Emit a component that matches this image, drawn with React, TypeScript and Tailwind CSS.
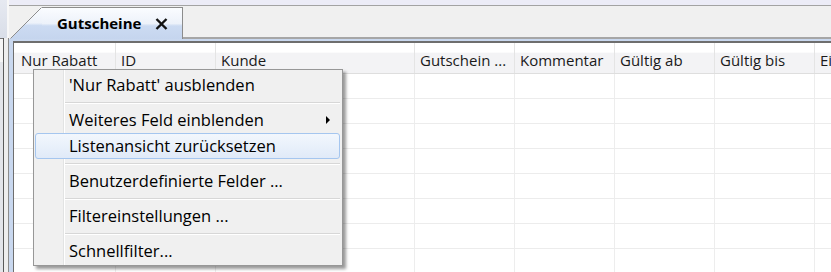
const columns = [
  { label: "Nur Rabatt", w: "w-[102px]", pl: "pl-[7px]" },
  { label: "ID", w: "w-[100px]", pl: "pl-[5px]" },
  { label: "Kunde", w: "w-[199px]", pl: "pl-[5px]" },
  { label: "Gutschein ...", w: "w-[100px]", pl: "pl-[5px]" },
  { label: "Kommentar", w: "w-[100px]", pl: "pl-[5px]" },
  { label: "Gültig ab", w: "w-[100px]", pl: "pl-[5px]" },
  { label: "Gültig bis", w: "w-[100px]", pl: "pl-[5px]" },
  { label: "Einlösung", w: "w-[100px]", pl: "pl-[5px]" },
];

const rows = Array.from({ length: 8 }, (_, i) => i);

type MenuEntry =
  | { kind: "item"; label: string; submenu?: boolean; active?: boolean }
  | { kind: "sep" };

const menu: MenuEntry[] = [
  { kind: "item", label: "'Nur Rabatt' ausblenden" },
  { kind: "sep" },
  { kind: "item", label: "Weiteres Feld einblenden", submenu: true },
  { kind: "item", label: "Listenansicht zurücksetzen", active: true },
  { kind: "sep" },
  { kind: "item", label: "Benutzerdefinierte Felder ..." },
  { kind: "sep" },
  { kind: "item", label: "Filtereinstellungen ..." },
  { kind: "sep" },
  { kind: "item", label: "Schnellfilter..." },
];

function TabSlant() {
  return (
    <svg width="32" height="32" viewBox="0 0 32 32" className="block shrink-0">
      <defs>
        <linearGradient id="tabgrad" x1="0" y1="0" x2="0" y2="1">
          <stop offset="0" stopColor="#fafcff" />
          <stop offset="0.5" stopColor="#edf2fa" />
          <stop offset="0.58" stopColor="#ccdbf2" />
          <stop offset="1" stopColor="#c5d5ee" />
        </linearGradient>
      </defs>
      <polygon points="0,32 31,0 32,0 32,32" fill="url(#tabgrad)" />
      <line x1="0.5" y1="31.5" x2="31.5" y2="0.5" stroke="#8c8c8c" strokeWidth="1" />
    </svg>
  );
}

function ContextMenu() {
  return (
    <div className="absolute left-[33px] top-[69px] w-[310px] border border-[#979797] bg-[#f0f0f0] pt-[2px] pb-[1px] text-[16.5px] text-black shadow-[3px_3px_3px_rgba(0,0,0,0.4)]">
      {/* icon gutter */}
      <div className="absolute left-[29px] top-0 bottom-0 w-[2px] border-l border-[#e2e3e3] border-r border-r-white" />
      {menu.map((m, i) =>
        m.kind === "sep" ? (
          <div key={i} className="h-[9px] pt-[4px] ml-[30px] mr-[2px]">
            <div className="h-[2px] border-t border-[#d7d7d7] border-b border-b-white" />
          </div>
        ) : m.active ? (
          <div
            key={i}
            className="relative h-[26px] ml-[1px] mr-[2px] flex items-center pl-[33px] rounded-[3px] border border-[#a5c6ef] bg-[linear-gradient(to_bottom,#f2f7fd,#e0eaf8)] whitespace-nowrap"
          >
            {m.label}
          </div>
        ) : (
          <div key={i} className="relative h-[26px] flex items-center pl-[35px] pr-[12px] whitespace-nowrap">
            <span>{m.label}</span>
            {m.submenu && (
              <span className="ml-auto w-0 h-0 border-y-[4px] border-y-transparent border-l-[4px] border-l-black" />
            )}
          </div>
        )
      )}
    </div>
  );
}

export default function App() {
  return (
    <div className="relative w-[831px] h-[272px] overflow-hidden flex bg-[#f0f0f0] font-['Open_Sans',sans-serif] text-[15px] text-[#111]">
      {/* left edge of neighbouring panel */}
      <div className="w-[9px] shrink-0 flex flex-col">
        <div className="h-[38px] flex">
          <div className="w-[7px] bg-[linear-gradient(to_bottom,#e6e9f1,#d9dee8)]" />
          <div className="w-[2px] bg-[#f7f7f7]" />
        </div>
        <div className="flex-1 flex">
          <div className="w-[3px] flex flex-col">
            <div className="h-[24px] bg-[#f6f6f6] border-t border-[#777]" />
            <div className="flex-1 bg-[#e3e5ea]" />
          </div>
          <div className="w-[1px] bg-[#5a5a5a]" />
          <div className="w-[4px] bg-[#eeeeee]" />
          <div className="w-[1px] bg-[#8d8d8d]" />
        </div>
      </div>

      <div className="flex-1 min-w-0 flex flex-col">
        <div className="h-[6px] bg-[#ececf7] border-b border-[#a3a3a3]" />
        {/* tab strip */}
        <div className="h-[33px] flex items-end">
          <div className="ml-[1px] h-[32px] flex">
            <TabSlant />
            <div className="w-[141px] border-t border-r border-[#8c8c8c] flex items-center pl-[15px] pb-[1px] bg-[linear-gradient(to_bottom,#fafcff_0%,#edf2fa_50%,#ccdbf2_58%,#c5d5ee_100%)]">
              <span className="font-bold text-[15px] text-black">Gutscheine</span>
              <svg width="13" height="12" viewBox="0 0 13 12" className="ml-[14px] mt-[2px]">
                <path d="M1.5 1 L11.5 11 M11.5 1 L1.5 11" stroke="#111" strokeWidth="2.4" strokeLinecap="butt" />
              </svg>
            </div>
          </div>
          <div className="flex-1 h-[2px] bg-[#a6a6a6]" />
        </div>

        {/* list pane */}
        <div className="flex-1 min-h-0 bg-[#c9d8ef] pl-[4px] pt-[2px]">
          <div className="h-full bg-white border-t-2 border-l border-[#6e6e6e] overflow-hidden">
            <div className="flex h-[31px] border-b border-[#dedede] bg-[linear-gradient(to_bottom,#ffffff_0%,#ffffff_30%,#f3f3f5_35%,#f3f3f5_100%)]">
              {columns.map((c) => (
                <div
                  key={c.label}
                  className={`${c.w} ${c.pl} shrink-0 border-r border-[#e4e4e4] flex items-center pt-[5px] whitespace-nowrap text-[#1a1a1a]`}
                >
                  {c.label}
                </div>
              ))}
            </div>
            {rows.map((r) => (
              <div key={r} className="flex h-[25px] border-b border-[#ececec]">
                {columns.map((c) => (
                  <div key={c.label} className={`${c.w} shrink-0 border-r border-[#ededed]`} />
                ))}
              </div>
            ))}
          </div>
        </div>
      </div>

      <ContextMenu />
    </div>
  );
}
